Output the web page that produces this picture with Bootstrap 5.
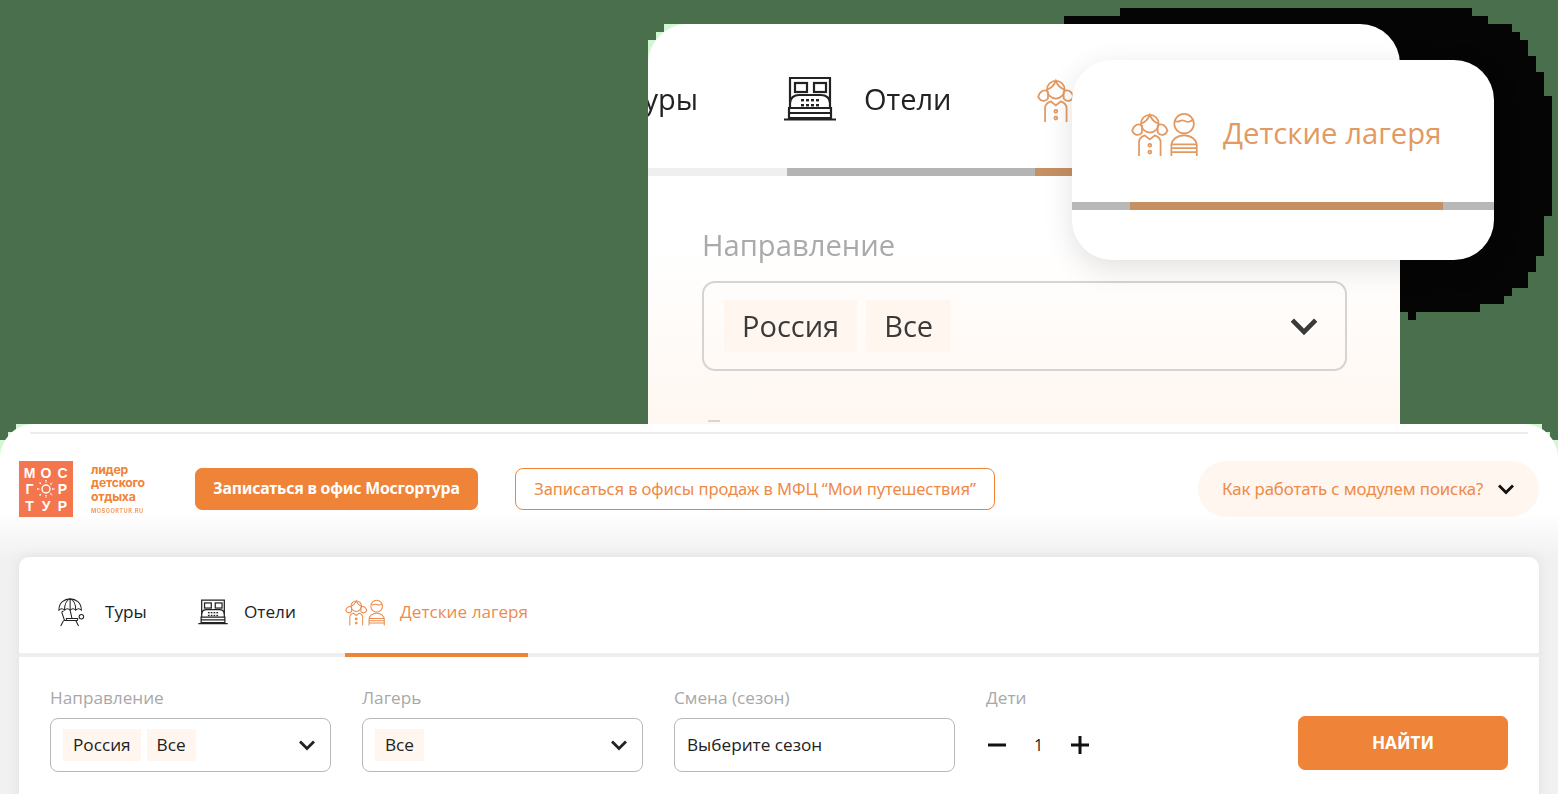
<!DOCTYPE html>
<html lang="ru">
<head>
    <meta charset="UTF-8">
    <title>Мосгортур</title>
    <meta name="viewport" content="width=device-width, initial-scale=1">
    <link href="https://cdn.jsdelivr.net/npm/bootstrap@5.3.2/dist/css/bootstrap.min.css" rel="stylesheet">
    <script src="https://cdn.jsdelivr.net/npm/bootstrap@5.3.2/dist/js/bootstrap.bundle.min.js"></script>
    <style>
        body {
            margin: 0;
            background-color: #4a6f4c;
            font-family: "Open Sans", "Noto Sans", sans-serif;
        }
        .stage { position: relative; width: 1558px; height: 794px; overflow: hidden; }
        .black-blob {
            position: absolute; left: 1040px; top: 0; width: 518px; height: 330px;
            background: #050505;
            clip-path: polygon(24px 16px, 80px 16px, 80px 8px, 432px 8px, 432px 16px, 448px 16px, 448px 24px, 472px 24px, 472px 32px, 480px 32px, 480px 40px, 488px 40px, 488px 56px, 496px 56px, 496px 72px, 504px 72px, 504px 96px, 512px 96px, 512px 216px, 504px 216px, 504px 256px, 496px 256px, 496px 272px, 488px 272px, 488px 288px, 472px 288px, 472px 296px, 464px 296px, 464px 304px, 440px 304px, 440px 312px, 376px 312px, 376px 320px, 368px 320px, 368px 312px, 360px 312px, 360px 60px, 24px 60px);
        }
        .mint-corner {
            position: absolute; width: 40px; height: 40px;
            background: linear-gradient(135deg, #d2f6d2 30%, #f6fdf6 70%);
            clip-path: polygon(16px 0, 40px 0, 40px 40px, 0 40px, 0 16px, 8px 16px, 8px 8px, 16px 8px);
        }
        .corner-back { left: 648px; top: 24px; }
        .corner-left { left: 0; top: 424px; }
        .corner-right { left: 1518px; top: 424px; transform: scaleX(-1); }
        .back-window {
            position: absolute; left: 648px; top: 24px; width: 752px; height: 400px;
            border-radius: 40px 40px 0 0;
            background: linear-gradient(#fff 0, #fff 55%, #fff7f1 100%);
            overflow: hidden;
            filter: blur(.4px);
        }
        .back-tabs { height: 144px; padding-left: 136px; position: relative; }
        .back-tab { font-size: 29px; color: #222; display: flex; align-items: center; gap: 28px; height: 150px; }
        .back-tab-cut { margin-left: -136px; width: 136px; overflow: hidden; justify-content: flex-end; padding-right: 86px; white-space: nowrap; }
        .back-tab-kids { color: #e29a62; margin-left: 85px; }
        .back-line { height: 8px; background: #efefef; display: flex; }
        .back-line i { display: block; height: 8px; }
        .line-a { width: 139px; }
        .line-b { width: 248px; background: #b4b4b4; }
        .line-c { width: 40px; background: #c59062; }
        .back-label { font-size: 29.2px; color: #aaa; margin: 49px 0 16px 54px; line-height: 40px; }
        .back-field {
            margin-left: 54px; width: 645px; height: 90px; border: 2px solid #d4d4d4; border-radius: 13px;
            padding: 0 26px 0 20px; display: flex; align-items: center; gap: 9px; color: #3a3a3a;
        }
        .back-chip { background: #fff6f0; font-size: 29px; padding: 0 18px; height: 52px; line-height: 52px; }
        .back-mark { width: 12px; height: 2px; background: #d6d6d6; margin: 49px 0 0 60px; }
        .popup-window {
            position: absolute; left: 1072px; top: 60px; width: 422px; height: 200px;
            background: #fff; border-radius: 40px; overflow: hidden;
            box-shadow: 0 8px 30px rgba(0, 0, 0, .12);
        }
        .popup-tab { height: 142px; padding: 50px 0 0 59px; display: flex; gap: 25px; color: #e29a62; font-size: 29.3px; }
        .popup-tab span { line-height: 46px; }
        .popup-line { height: 8px; background: #b8b8b8; padding-left: 58px; }
        .popup-line i { display: block; height: 8px; width: 313px; background: #c59062; }
        .main-window {
            position: absolute; left: 0; top: 424px; width: 1558px; height: 400px;
            border-radius: 34px 34px 0 0;
            background: linear-gradient(#fff 0, #fff 90px, #f1f1f1 133px);
            padding: 0 19px;
        }
        .top-line { height: 2px; background: #eceeee; margin: 0 11px 27px; position: relative; top: 8px; }
        .head-row { height: 56px; margin-bottom: 40px; padding-top: 8px; box-sizing: content-box; margin-top: 0; }
        .logo-box {
            width: 54px; height: 56px; background: #f4764f; color: #fff; padding: 4px 3px;
            display: grid; grid-template-columns: repeat(3, 1fr); grid-template-rows: repeat(3, 1fr);
            font: 700 14px/1 "Liberation Sans", sans-serif; text-align: center; align-items: center; justify-items: center;
        }
        .logo-text { margin-left: 18px; width: 82px; color: #ef8337; font: 700 12.2px/13.5px "Inter", sans-serif; letter-spacing: -.2px; }
        .logo-text small { display: block; font-size: 5.6px; letter-spacing: .5px; line-height: 8px; margin-top: 4px; opacity: .8; }
        .btn-main, .btn-main:hover {
            background: #ef8337; border: 1px solid #ef8337; color: #fff; border-radius: 7px; font-weight: 700;
            font-family: "Noto Sans", sans-serif;
        }
        .btn-office { margin-left: 22px; width: 283px; height: 42px; font-size: 15.8px; padding: 0; letter-spacing: -.2px; white-space: nowrap; }
        .btn-line, .btn-line:hover {
            margin-left: 37px; width: 480px; height: 42px; padding: 0; background: #fff; border: 1px solid #ef8337; color: #ee8a48; border-radius: 8px;
            font-size: 16.6px; white-space: nowrap; font-family: "Noto Sans", sans-serif; letter-spacing: -.1px;
        }
        .help-pill {
            margin-left: auto; width: 341px; height: 56px; background: #fff6ef; border-radius: 28px;
            padding: 0 24px; font-size: 16.8px; color: #ee8a48; font-family: "Noto Sans", sans-serif;
            white-space: nowrap; letter-spacing: -.1px;
        }
        .help-pill svg { color: #111; }
        .search-box { width: 1520px; height: 300px; background: #fff; border-radius: 10px; box-shadow: 0 0 14px rgba(0, 0, 0, .07); }
        .tab-row { height: 100px; border-bottom: 4px solid #eee; padding-left: 38px; position: relative; }
        .tab-item { font-size: 17.2px; color: #222; display: flex; align-items: center; height: 96px; padding-top: 14px; }
        .tab-tour { width: 141px; gap: 18px; }
        .tab-hotel { width: 147px; gap: 16px; }
        .tab-on { color: #ec8c4e; height: 100px; margin-bottom: -4px; border-bottom: 4px solid #ef8337; gap: 15px; }
        .tab-on svg { flex: none; }
        .search-row { padding: 30px 31px 0; }
        .field-col { width: 281px; margin-right: 31px; }
        .field-label { font-size: 17.2px; color: #a8a8a8; line-height: 22px; margin-bottom: 9px; }
        .field-box {
            height: 54px; border: 1px solid #b8b8b8; border-radius: 8px; padding: 0 14px 0 12px; color: #222;
            font-size: 17.2px; gap: 6px; display: flex; align-items: center;
        }
        .chip-item { background: #fff6ef; height: 32px; line-height: 32px; padding: 0 10px; }
        .count-box { height: 54px; font-size: 16px; color: #222; }
        .step-minus { margin-left: 2px; }
        .btn-find { width: 210px; height: 54px; margin-left: auto; margin-top: 29px; font-size: 17.2px; padding: 0; }
        .chevron { margin-left: auto; flex: none; }
    </style>
</head>
<body>
    <svg width="0" height="0" class="position-absolute">
        <defs>
            <symbol id="ic-chevron" viewBox="0 0 18 12"><path d="M2 2.5 9 9.5 16 2.5" fill="none" stroke="currentColor" stroke-width="2.8"/></symbol>
            <symbol id="ic-tour" viewBox="0 0 32 32">
                <g fill="none" stroke="currentColor" stroke-width="1.1">
                    <path d="M2 14C2 6 8 2 14 2s12 4 12 12c-2-2-4-2-6 0-2-2-4-2-6 0-2-2-4-2-6 0-2-2-4-2-6 0Z"/>
                    <path d="M8 14C8 7 11 3 14 2c3 1 6 5 6 12M14 2v12M14 14l2 9"/>
                    <circle cx="26" cy="21" r="2.4"/>
                    <path d="M5 16l3 9h14M7 25l-3 6M10 25v-2h12v2M20 25l3 6M5 16l2-1"/>
                </g>
            </symbol>
            <symbol id="ic-hotel" viewBox="0 0 52 46">
                <g fill="none" stroke="currentColor" stroke-width="2.2">
                    <path d="M6 26V2h40v24"/>
                    <rect x="11" y="7" width="12" height="9"/><rect x="30" y="7" width="12" height="9"/>
                    <path d="M6 32v-5c0-5 4-8 9-8h22c5 0 9 3 9 8v5"/>
                    <path d="M5 32h42v10H5zM0 43.5h52M5 37h42"/>
                </g>
                <g fill="currentColor">
                    <rect x="17" y="23" width="3" height="2.4"/><rect x="22" y="23" width="3" height="2.4"/><rect x="27" y="23" width="3" height="2.4"/><rect x="32" y="23" width="3" height="2.4"/>
                    <rect x="17" y="28" width="3" height="2.4"/><rect x="22" y="28" width="3" height="2.4"/><rect x="27" y="28" width="3" height="2.4"/><rect x="32" y="28" width="3" height="2.4"/>
                </g>
            </symbol>
            <symbol id="ic-kids" viewBox="0 0 68 48">
                <g fill="none" stroke="currentColor" stroke-width="1.8">
                    <circle cx="19" cy="14" r="9"/>
                    <path d="M10 14c3-1 7-4 9-9 2 5 6 8 9 9"/>
                    <path d="M11 16c-3-3-8-1-10 5 2 5 7 6 10 2zM27 16c3-3 8-1 10 5-2 5-7 6-10 2z"/>
                    <path d="M8 47V33c0-4 3-6 6-7l5 4 5-4c3 1 6 3 6 7v14"/>
                    <circle cx="19" cy="36" r="1.5"/><circle cx="19" cy="43" r="1.5"/>
                    <circle cx="54" cy="14" r="10"/>
                    <path d="M45 11c3 3 5-2 9 0s6 1 9-1"/>
                    <path d="M41 47V37c0-7 6-11 13-11s13 4 13 11v10"/>
                    <path d="M41 35h26M41 39h26M41 43h26"/>
                </g>
            </symbol>
        </defs>
    </svg>

    <div class="stage">
        <div class="black-blob"></div>
        <div class="mint-corner corner-back"></div>

        <div class="back-window">
            <div class="back-tabs d-flex">
                <div class="back-tab back-tab-cut">Туры</div>
                <div class="back-tab"><svg width="52" height="46"><use href="#ic-hotel"/></svg>Отели</div>
                <div class="back-tab back-tab-kids"><svg width="67" height="47"><use href="#ic-kids"/></svg></div>
            </div>
            <div class="back-line">
                <i class="line-a"></i>
                <i class="line-b"></i>
                <i class="line-c"></i>
            </div>
            <div class="back-label">Направление</div>
            <div class="back-field">
                <span class="back-chip">Россия</span>
                <span class="back-chip">Все</span>
                <svg class="chevron" width="30" height="20"><use href="#ic-chevron"/></svg>
            </div>
            <div class="back-mark"></div>
        </div>

        <div class="popup-window">
            <div class="popup-tab"><svg width="67" height="47"><use href="#ic-kids"/></svg><span>Детские лагеря</span></div>
            <div class="popup-line"><i></i></div>
        </div>

        <div class="mint-corner corner-left"></div>
        <div class="mint-corner corner-right"></div>

        <div class="main-window">
            <div class="top-line"></div>
            <div class="head-row d-flex align-items-center">
                <div class="logo-box">
                    <span>М</span><span>О</span><span>С</span>
                    <span>Г</span>
                    <svg width="18" height="18" viewBox="0 0 18 18"><circle cx="9" cy="9" r="4" fill="none" stroke="#fff" stroke-width="1.4"/><path d="M9 0v3M9 15v3M0 9h3M15 9h3M2.6 2.6l2 2M13.4 13.4l2 2M2.6 15.4l2-2M13.4 4.6l2-2" stroke="#fff" stroke-width="1.4" stroke-dasharray="1.6 1"/></svg>
                    <span>Р</span>
                    <span>Т</span><span>У</span><span>Р</span>
                </div>
                <div class="logo-text">лидер<br>детского<br>отдыха<small>MOSGORTUR.RU</small></div>
                <button class="btn btn-main btn-office">Записаться в офис Мосгортура</button>
                <button class="btn btn-line">Записаться в офисы продаж в МФЦ “Мои путешествия”</button>
                <div class="help-pill d-flex align-items-center">
                    Как работать с модулем поиска?
                    <svg class="chevron" width="18" height="12"><use href="#ic-chevron"/></svg>
                </div>
            </div>

            <div class="search-box">
                <div class="tab-row d-flex">
                    <div class="tab-item tab-tour"><svg width="30" height="30"><use href="#ic-tour"/></svg>Туры</div>
                    <div class="tab-item tab-hotel"><svg width="30" height="26"><use href="#ic-hotel"/></svg>Отели</div>
                    <div class="tab-item tab-on"><svg width="40" height="28"><use href="#ic-kids"/></svg>Детские лагеря</div>
                </div>
                <div class="search-row d-flex">
                    <div class="field-col">
                        <div class="field-label">Направление</div>
                        <div class="field-box">
                            <span class="chip-item">Россия</span><span class="chip-item">Все</span>
                            <svg class="chevron" width="18" height="12"><use href="#ic-chevron"/></svg>
                        </div>
                    </div>
                    <div class="field-col">
                        <div class="field-label">Лагерь</div>
                        <div class="field-box">
                            <span class="chip-item">Все</span>
                            <svg class="chevron" width="18" height="12"><use href="#ic-chevron"/></svg>
                        </div>
                    </div>
                    <div class="field-col">
                        <div class="field-label">Смена (сезон)</div>
                        <div class="field-box">Выберите сезон</div>
                    </div>
                    <div>
                        <div class="field-label">Дети</div>
                        <div class="count-box d-flex align-items-center">
                            <svg class="step-minus" width="18" height="18"><path d="M0 9h18" stroke="#111" stroke-width="3"/></svg>
                            <span class="mx-4 px-1">1</span>
                            <svg width="18" height="18"><path d="M0 9h18M9 0v18" stroke="#111" stroke-width="3"/></svg>
                        </div>
                    </div>
                    <button class="btn btn-main btn-find">НАЙТИ</button>
                </div>
            </div>
        </div>
    </div>
</body>
</html>
